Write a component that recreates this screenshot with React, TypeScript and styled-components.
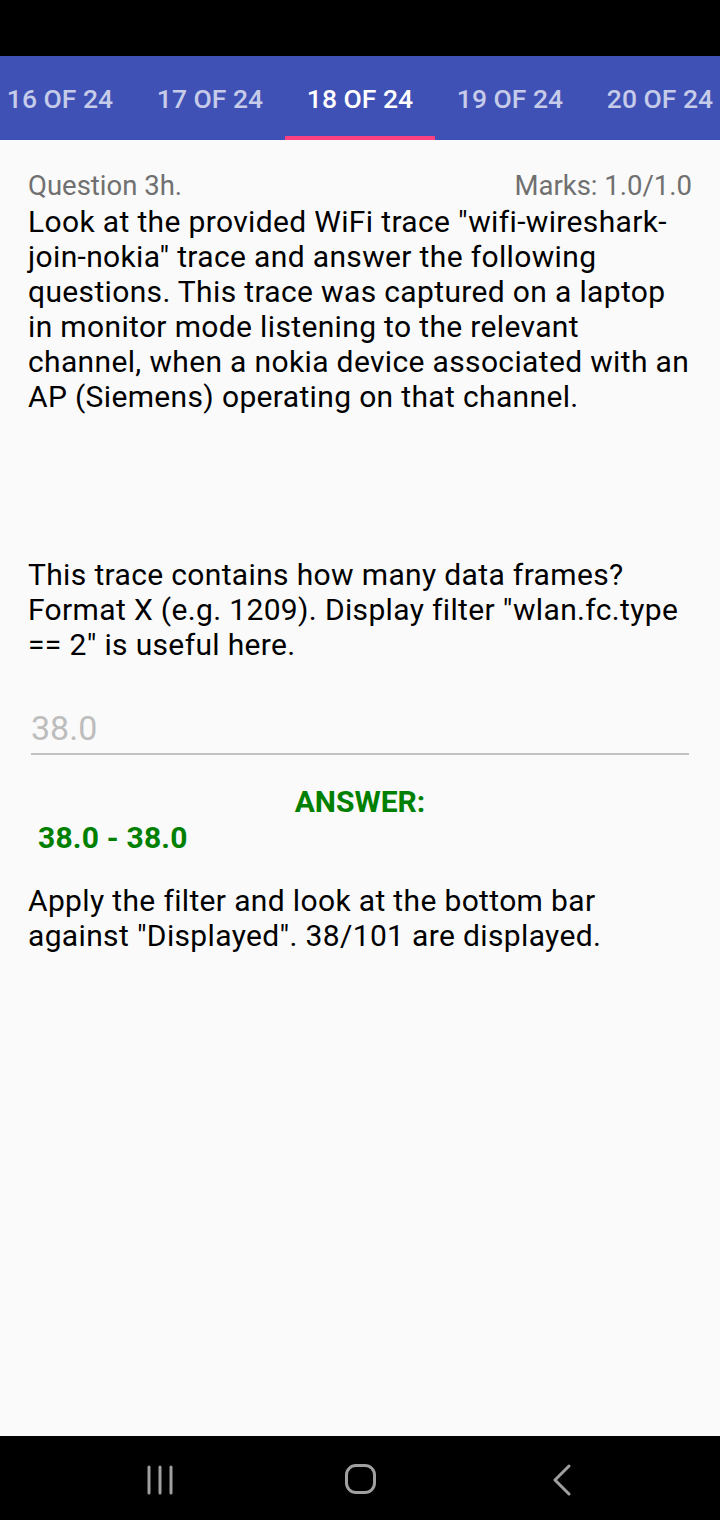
import React from "react";
import styled, { createGlobalStyle } from "styled-components";

const Global = createGlobalStyle`
  html, body { margin: 0; padding: 0; background: #fafafa; }
  body { font-family: Roboto, "Noto Sans", sans-serif; }
`;

const Screen = styled.div`
  width: 720px;
  height: 1520px;
  display: flex;
  flex-direction: column;
  background: #fafafa;
  overflow: hidden;
`;

const StatusBar = styled.div`
  height: 56px;
  background: #000;
  flex: none;
`;

const TabBar = styled.div`
  height: 84px;
  background: #3f51b5;
  display: flex;
  flex: none;
  margin-left: -15px;
`;

const Tab = styled.div<{ $active?: boolean }>`
  width: 150px;
  flex: none;
  position: relative;
  display: flex;
  align-items: center;
  justify-content: center;
  font-family: Roboto, sans-serif;
  font-weight: 500;
  font-size: 26.5px;
  color: ${(p) => (p.$active ? "#ffffff" : "#c5cbe9")};
  &::after {
    content: "";
    display: ${(p) => (p.$active ? "block" : "none")};
    position: absolute;
    left: 0;
    right: 0;
    bottom: 0;
    height: 4px;
    background: #ff4081;
  }
`;

const Content = styled.div`
  flex: 1;
  padding: 31px 28px 0 28px;
  display: flex;
  flex-direction: column;
`;

const HeaderRow = styled.div`
  display: flex;
  justify-content: space-between;
  align-items: baseline;
  font-size: 27.5px;
  color: #707070;
  line-height: 30px;
`;

const Paragraph = styled.p<{ $mt: number }>`
  margin: ${(p) => p.$mt}px 0 0 0;
  font-size: 30px;
  letter-spacing: 0.35px;
  line-height: 35px;
  color: #000;
`;

const InputWrap = styled.div`
  margin: 46px 3px 0 3px;
  border-bottom: 2px solid #c2c2c2;
  padding-bottom: 5px;
  font-size: 34px;
  line-height: 40px;
  color: #bdbdbd;
`;

const AnswerLabel = styled.div`
  margin-top: 28px;
  text-align: center;
  font-weight: 700;
  font-size: 30px;
  line-height: 37px;
  color: #008000;
`;

const AnswerValue = styled.div`
  margin-left: 10px;
  font-weight: 700;
  font-size: 30px;
  letter-spacing: 0.2px;
  line-height: 36px;
  color: #008000;
`;

const NavBar = styled.div`
  height: 84px;
  background: #000;
  flex: none;
  display: grid;
  grid-template-columns: repeat(3, 201px);
  align-items: center;
  justify-items: center;
  padding: 3px 58px 0 59px;
  box-sizing: border-box;
`;

const NavIcon = styled.svg`
  display: block;
`;

export default function App() {
  const tabs = [16, 17, 18, 19, 20];
  return (
    <Screen>
      <Global />
      <StatusBar />
      <TabBar>
        {tabs.map((n) => (
          <Tab key={n} $active={n === 18}>
            {n} OF 24
          </Tab>
        ))}
      </TabBar>
      <Content>
        <HeaderRow>
          <span>Question 3h.</span>
          <span>Marks: 1.0/1.0</span>
        </HeaderRow>
        <Paragraph $mt={3}>
          Look at the provided WiFi trace "wifi-wireshark-join-nokia" trace and answer the
          following questions. This trace was captured on a laptop in monitor mode listening to
          the relevant channel, when a nokia device associated with an AP (Siemens) operating on
          that channel.
        </Paragraph>
        <Paragraph $mt={143}>
          This trace contains how many data frames? Format X (e.g. 1209). Display filter
          "wlan.fc.type == 2" is useful here.
        </Paragraph>
        <InputWrap>38.0</InputWrap>
        <AnswerLabel>ANSWER:</AnswerLabel>
        <AnswerValue>38.0 - 38.0</AnswerValue>
        <Paragraph $mt={27}>
          Apply the filter and look at the bottom bar against "Displayed". 38/101 are
          displayed.
        </Paragraph>
      </Content>
      <NavBar>
        <NavIcon width="28" height="30" viewBox="0 0 28 30">
          <g stroke="#a0a0a0" strokeWidth="3" strokeLinecap="round">
            <line x1="3" y1="2" x2="3" y2="28" />
            <line x1="14" y1="2" x2="14" y2="28" />
            <line x1="25" y1="2" x2="25" y2="28" />
          </g>
        </NavIcon>
        <NavIcon width="32" height="31" viewBox="0 0 32 31">
          <rect x="1.5" y="1.5" width="28" height="27" rx="9.5" fill="none" stroke="#a0a0a0" strokeWidth="3" />
        </NavIcon>
        <NavIcon width="20" height="32" viewBox="0 0 20 32">
          <polyline points="17,2 3,16 17,30" fill="none" stroke="#a0a0a0" strokeWidth="3" strokeLinecap="round" strokeLinejoin="round" />
        </NavIcon>
      </NavBar>
    </Screen>
  );
}
